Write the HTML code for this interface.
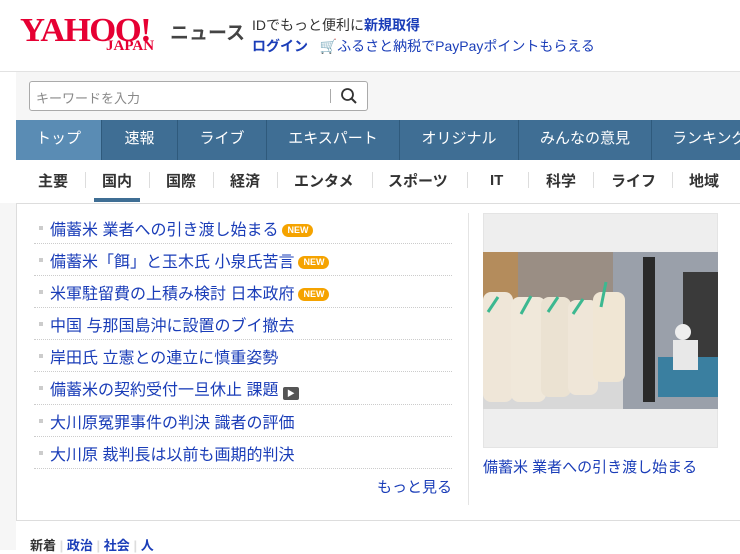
<!DOCTYPE html>
<html><head><meta charset="utf-8"><style>
*{margin:0;padding:0;box-sizing:border-box}
body{width:740px;height:550px;overflow:hidden;background:#fff;font-family:"Liberation Sans","Noto Sans CJK JP",sans-serif;position:relative}
.a{position:absolute}
a{color:#1a3db8;text-decoration:none}
.nav{top:120px;left:16px;width:724px;height:40px;background:#3f6e94;display:flex}
.nav div{color:#fff;font-size:15px;line-height:38px;text-align:center;border-right:1px solid #2f5a7c;flex:none;white-space:nowrap}
.sub div{position:absolute;top:170px;font-size:15px;font-weight:bold;color:#333}
.sep{position:absolute;top:172px;width:1px;height:16px;background:#ddd}
.li{position:absolute;left:50px;font-size:16px;color:#1a3db8;white-space:nowrap}
.dot{position:absolute;left:39px;width:4px;height:4px;background:#ccc}
.hr{position:absolute;left:34px;width:418px;border-top:1px dotted #ccc}
.new{display:inline-block;background:#f5a300;color:#fff;font-size:9px;font-weight:bold;border-radius:7px;padding:0 5px;line-height:13px;vertical-align:2px;margin-left:4px}
</style></head><body>
<div class="a" style="left:0;top:0;width:740px;height:72px;background:#fff;border-bottom:1px solid #e2e2e2"></div>
<div class="a" style="left:20px;top:12px;font-family:'Liberation Serif',serif;font-weight:bold;font-size:34px;color:#e60033;letter-spacing:-1.5px;transform:scaleX(1.02);transform-origin:left">YAHOO!</div>
<div class="a" style="left:106px;top:38px;font-family:'Liberation Serif',serif;font-weight:bold;font-size:15px;color:#e60033">JAPAN</div>
<div class="a" style="left:170px;top:18px;font-size:19px;font-weight:bold;color:#444">ニュース</div>
<div class="a" style="left:252px;top:15px;font-size:14px;color:#333">IDでもっと便利に<b style="color:#1a3db8">新規取得</b></div>
<div class="a" style="left:252px;top:36px;font-size:14px;color:#1a3db8"><b>ログイン</b>&nbsp;&nbsp;&nbsp;<span style="color:#f07800">🛒</span>ふるさと納税でPayPayポイントもらえる</div>
<div class="a" style="left:16px;top:72px;width:724px;height:48px;background:#f6f6f6"></div>
<div class="a" style="left:29px;top:81px;width:339px;height:30px;background:#fff;border:1px solid #aaa;border-radius:3px"></div>
<div class="a" style="left:36px;top:88px;font-size:13px;color:#888">キーワードを入力</div>
<div class="a" style="left:330px;top:89px;width:1px;height:14px;background:#aaa"></div>
<svg class="a" style="left:340px;top:87px" width="18" height="18" viewBox="0 0 18 18"><circle cx="7.5" cy="7.5" r="5.5" fill="none" stroke="#333" stroke-width="1.8"/><path d="M11.5 11.5L16 16" stroke="#333" stroke-width="2"/></svg>
<div class="a nav"><div style="width:86px;background:#5a8cb4">トップ</div><div style="width:76px">速報</div><div style="width:89px">ライブ</div><div style="width:133px">エキスパート</div><div style="width:119px">オリジナル</div><div style="width:133px">みんなの意見</div><div style="width:88px;text-align:left;padding-left:20px;border:0">ランキング</div></div>
<div class="sub">
<div style="left:38px">主要</div><div style="left:102px">国内</div><div style="left:166px">国際</div><div style="left:230px">経済</div><div style="left:294px">エンタメ</div><div style="left:388px">スポーツ</div><div style="left:490px;top:172px">IT</div><div style="left:546px">科学</div><div style="left:611px">ライフ</div><div style="left:689px">地域</div>
</div>
<span class="sep" style="left:85px"></span><span class="sep" style="left:149px"></span><span class="sep" style="left:213px"></span><span class="sep" style="left:277px"></span><span class="sep" style="left:372px"></span><span class="sep" style="left:467px"></span><span class="sep" style="left:528px"></span><span class="sep" style="left:593px"></span><span class="sep" style="left:672px"></span>
<div class="a" style="left:94px;top:198px;width:46px;height:4px;background:#3f6e94"></div>
<div class="a" style="left:0;top:203px;width:16px;height:347px;background:#f6f6f6"></div>
<div class="a" style="left:16px;top:203px;width:724px;height:318px;border-top:1px solid #ddd;border-left:1px solid #ddd;border-bottom:1px solid #ddd"></div>
<div class="a" style="left:468px;top:213px;width:1px;height:292px;background:#e4e4e4"></div>
<div class="dot" style="top:226px"></div><div class="li" style="top:216px">備蓄米 業者への引き渡し始まる<span class="new">NEW</span></div><div class="hr" style="top:243px"></div>
<div class="dot" style="top:258px"></div><div class="li" style="top:248px">備蓄米「餌」と玉木氏 小泉氏苦言<span class="new">NEW</span></div><div class="hr" style="top:275px"></div>
<div class="dot" style="top:290px"></div><div class="li" style="top:280px">米軍駐留費の上積み検討 日本政府<span class="new">NEW</span></div><div class="hr" style="top:307px"></div>
<div class="dot" style="top:322px"></div><div class="li" style="top:312px">中国 与那国島沖に設置のブイ撤去</div><div class="hr" style="top:339px"></div>
<div class="dot" style="top:354px"></div><div class="li" style="top:344px">岸田氏 立憲との連立に慎重姿勢</div><div class="hr" style="top:371px"></div>
<div class="dot" style="top:386px"></div><div class="li" style="top:376px">備蓄米の契約受付一旦休止 課題 <span style="display:inline-block;width:16px;height:13px;background:#555;border-radius:2px;color:#fff;font-size:8px;line-height:13px;text-align:center;vertical-align:-1px">▶</span></div><div class="hr" style="top:404px"></div>
<div class="dot" style="top:419px"></div><div class="li" style="top:409px">大川原冤罪事件の判決 識者の評価</div><div class="hr" style="top:436px"></div>
<div class="dot" style="top:451px"></div><div class="li" style="top:441px">大川原 裁判長は以前も画期的判決</div><div class="hr" style="top:468px"></div>
<div class="a" style="left:377px;top:476px;font-size:15px;color:#1a3db8">もっと見る</div>
<div class="a" style="left:483px;top:213px;width:235px;height:235px;background:#eee;border:1px solid #e4e4e4"></div>
<svg class="a" style="left:483px;top:252px" width="235" height="157" viewBox="0 0 235 157">
<rect width="235" height="157" fill="#8a8f98"/>
<rect x="0" y="0" width="35" height="157" fill="#b48c5c"/>
<rect x="35" y="0" width="95" height="60" fill="#9a8e84"/>
<rect x="130" y="0" width="105" height="157" fill="#9aa0aa"/>
<rect x="200" y="20" width="35" height="110" fill="#3a3a3a"/>
<rect x="0" y="110" width="140" height="47" fill="#d8d8d8"/>
<rect x="0" y="40" width="30" height="110" rx="8" fill="#efe6d8"/>
<rect x="28" y="45" width="35" height="105" rx="8" fill="#f0e8da"/>
<rect x="58" y="45" width="30" height="100" rx="8" fill="#ebe2d2"/>
<rect x="85" y="48" width="30" height="95" rx="8" fill="#efe6d8"/>
<rect x="110" y="40" width="32" height="90" rx="8" fill="#f0e6d4"/>
<path d="M5 60l10-15M38 62l10-18M65 60l10-15M90 62l10-15M118 55l5-25" stroke="#3cb890" stroke-width="3"/>
<rect x="160" y="5" width="12" height="145" fill="#2a2a2a"/>
<rect x="175" y="105" width="60" height="40" fill="#3a7fa0"/>
<circle cx="200" cy="80" r="8" fill="#eee"/>
<rect x="190" y="88" width="25" height="30" fill="#e8e8e8"/>
</svg>
<div class="a" style="left:483px;top:456px;font-size:15px;color:#1a3db8">備蓄米 業者への引き渡し始まる</div>
<div class="a" style="left:30px;top:535px;font-size:13px;font-weight:bold;color:#333">新着 <span style="color:#ddd">|</span> <a>政治</a> <span style="color:#ddd">|</span> <a>社会</a> <span style="color:#ddd">|</span> <a>人</a></div>
</body></html>
